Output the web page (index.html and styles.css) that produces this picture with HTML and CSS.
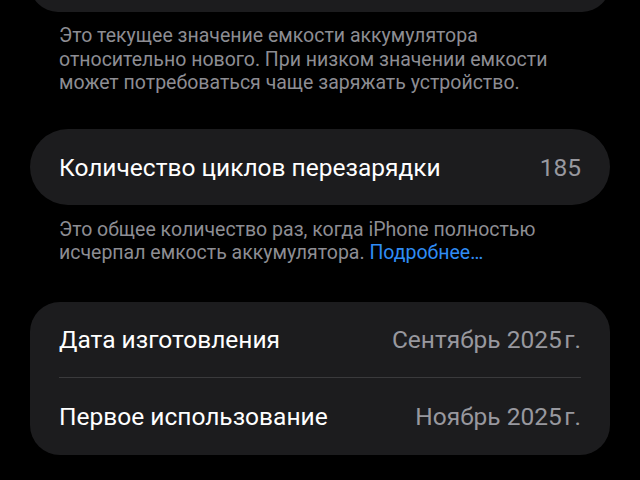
FILE: index.html
```html
<!DOCTYPE html>
<html lang="ru">
<head>
<meta charset="utf-8">
<link rel="stylesheet" href="styles.css">
</head>
<body>
<div class="page">
  <div class="card card-top"></div>
  <p class="footer first">Это текущее значение емкости аккумулятора относительно нового. При низком значении емкости может потребоваться чаще заряжать устройство.</p>

  <div class="card card-pill">
    <div class="row">
      <span class="label">Количество циклов перезарядки</span>
      <span class="value">185</span>
    </div>
  </div>
  <p class="footer">Это общее количество раз, когда iPhone полностью исчерпал емкость аккумулятора. <a class="link">Подробнее…</a></p>

  <div class="card card-group">
    <div class="row">
      <span class="label">Дата изготовления</span>
      <span class="value">Сентябрь 2025&#8202;г.</span>
    </div>
    <div class="sep"></div>
    <div class="row last">
      <span class="label">Первое использование</span>
      <span class="value">Ноябрь 2025&#8202;г.</span>
    </div>
  </div>
</div>
</body>
</html>
```

FILE: styles.css
```css
html, body {
  margin: 0;
  padding: 0;
  background: #000;
  height: 480px;
  overflow: hidden;
}
.page {
  padding: 0 30px;
  font-family: Roboto, "Noto Sans", sans-serif;
  color: #fff;
}
.card {
  background: #1c1c1e;
}
.card-top {
  height: 60px;
  margin-top: -48px;
  border-radius: 28px;
}
.footer {
  margin: 0;
  padding: 0 29px;
  font-size: 19.5px;
  line-height: 23.5px;
  color: #8d8d93;
}
.footer.first {
  padding-top: 12px;
}
.card-pill {
  margin-top: 34px;
  height: 76px;
  border-radius: 38px;
  display: flex;
  align-items: center;
}
.card-pill + .footer {
  padding-top: 13px;
}
.row {
  flex: 1;
  display: flex;
  justify-content: space-between;
  align-items: center;
  padding: 0 29px;
  font-size: 24.5px;
}
.card-pill .row {
  padding-top: 2px;
}
.value {
  color: #98989e;
}
.link {
  color: #2f8cf5;
  text-decoration: none;
}
.card-group {
  margin-top: 37px;
  border-radius: 30px;
}
.card-group .row {
  height: 75px;
}
.card-group .row.last {
  height: 77px;
}
.sep {
  height: 1px;
  background: #3a3a3c;
  margin: 0 29px;
}
```
